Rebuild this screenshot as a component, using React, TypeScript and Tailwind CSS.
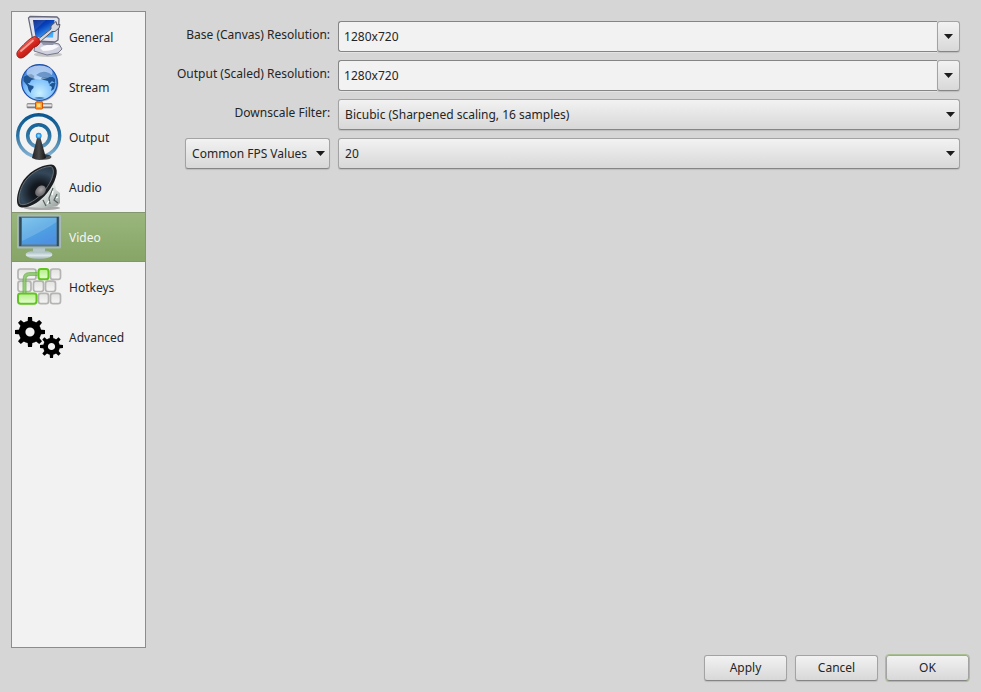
import { useState } from 'react';
import type { ReactNode } from 'react';

const GEAR_TEETH = [0, 45, 90, 135, 180, 225, 270, 315];

function GeneralIcon() {
  return (
    <svg viewBox="0 0 48 48" className="size-12 shrink-0" aria-hidden="true">
      <defs>
        <linearGradient id="pc-screen" x1="0" y1="0" x2="0.7" y2="1">
          <stop offset="0" stopColor="#001a78" />
          <stop offset="0.45" stopColor="#0743bd" />
          <stop offset="1" stopColor="#48b0ff" />
        </linearGradient>
        <linearGradient id="pc-handle" x1="0.2" y1="0.2" x2="0.8" y2="0.9">
          <stop offset="0" stopColor="#f58b80" />
          <stop offset="0.45" stopColor="#d8281f" />
          <stop offset="1" stopColor="#9c0d0a" />
        </linearGradient>
      </defs>
      <ellipse cx="33" cy="41.500" rx="14" ry="2.500" fill="#000" opacity="0.18" />
      <path d="M20 31 30 28 44 31 47 36 43 40 32 42 19 38Z" fill="#cfd0de" stroke="#777889" strokeWidth="1" strokeLinejoin="round" />
      <path d="M25 35q9-6 19-2-5 5-16 5Z" fill="#f7f7fc" />
      <path d="M25 27 41 28 38 32 28 32Z" fill="#9395a8" />
      <path d="M15 3.500 42 4 44 6 43 27 40 29 18 28 13.500 5Z" fill="#e1e2ec" stroke="#66687b" strokeWidth="1.300" strokeLinejoin="round" />
      <path d="M18 7 39.500 7 38 24.500 20.500 24.500Z" fill="url(#pc-screen)" />
      <path d="M18 7 31 7 20 17Z" fill="#fff" opacity="0.1" />
      <path d="M22 27 36 16 36 13 41 8.500 42 12 45 11.500 44 15 40 18.500 37 18.500 25 29Z" fill="#d5d7df" stroke="#555766" strokeWidth="1" strokeLinejoin="round" />
      <path d="M2.500 38.500C6 34 11 29 15.500 25.500q4-3.500 7-1 3.500 3 2 6-2 3-6 4C16 38 12 42 8 44.500c-4.500 2-7.500-2-5.500-6Z" fill="url(#pc-handle)" stroke="#98201a" strokeWidth="1" />
      <path d="M6 38 18 27.500" stroke="#ffb6ad" strokeWidth="1.800" strokeLinecap="round" opacity="0.8" />
    </svg>
  );
}

function StreamIcon() {
  return (
    <svg viewBox="0 0 48 48" className="size-12 shrink-0" aria-hidden="true">
      <defs>
        <radialGradient id="globe" cx="0.5" cy="0.8" r="0.8">
          <stop offset="0" stopColor="#c9f0ff" />
          <stop offset="0.5" stopColor="#7fc0fb" />
          <stop offset="1" stopColor="#2a6ccf" />
        </radialGradient>
        <linearGradient id="globe-shine" x1="0" y1="0" x2="0" y2="1">
          <stop offset="0" stopColor="#fff" stopOpacity="0.6" />
          <stop offset="1" stopColor="#fff" stopOpacity="0.4" />
        </linearGradient>
        <linearGradient id="pipe" x1="0" y1="0" x2="0" y2="1">
          <stop offset="0" stopColor="#8d8d8d" />
          <stop offset="0.4" stopColor="#f2f2f2" />
          <stop offset="1" stopColor="#666" />
        </linearGradient>
      </defs>
      <circle cx="25.500" cy="20.500" r="18" fill="#000" opacity="0.25" />
      <path d="M22 35h5v7h-5Z" fill="#aaa" stroke="#666" strokeWidth="0.600" />
      <circle cx="24.500" cy="19.500" r="17.800" fill="url(#globe)" stroke="#1c50ab" strokeWidth="1.200" />
      <path d="M8.500 14q4-3 8-3l3 2-1 2 2 1-4 1-2 3-2 0 2 2 4 1 0 2-2 2-1 3-2-3-1-4-4-5Z" fill="#1f5592" />
      <path d="M27 14 38 14 40 16 40 20 37 18 34 21 33 18 29 17 26 16Z" fill="#1f5592" />
      <path d="M37 20 40.500 20 39 26 36 28 37 24 34 22Z" fill="#1f5592" />
      <path d="M19 35q5-2 11 0-5 2-11 0Z" fill="#2868b4" opacity="0.8" />
      <ellipse cx="24.500" cy="9.500" rx="13" ry="7" fill="url(#globe-shine)" />
      <path d="M21 12q5-4 10-3 5 1 6 4-8 4-16-1Z" fill="#1f5592" opacity="0.45" />
      <rect x="12" y="40.500" width="25" height="4.500" rx="0.800" fill="url(#pipe)" stroke="#777" strokeWidth="0.600" />
      <rect x="20.500" y="39" width="7" height="7" rx="0.800" fill="#ff9d20" stroke="#d35400" strokeWidth="1" />
      <rect x="22" y="40.500" width="3.500" height="3.500" fill="#ffdf80" />
    </svg>
  );
}

function OutputIcon() {
  return (
    <svg viewBox="0 0 48 48" className="size-12 shrink-0" aria-hidden="true">
      <defs>
        <linearGradient id="waves" gradientUnits="userSpaceOnUse" x1="0" y1="0" x2="0" y2="46">
          <stop offset="0" stopColor="#07568f" />
          <stop offset="0.45" stopColor="#266f9f" />
          <stop offset="1" stopColor="#8fb9d8" />
        </linearGradient>
        <linearGradient id="mast" x1="0" y1="0" x2="1" y2="0">
          <stop offset="0" stopColor="#222" />
          <stop offset="0.5" stopColor="#4a4a4a" />
          <stop offset="1" stopColor="#111" />
        </linearGradient>
        <radialGradient id="beacon">
          <stop offset="0" stopColor="#a6e4ff" />
          <stop offset="1" stopColor="#087fe0" />
        </radialGradient>
      </defs>
      <circle cx="23.700" cy="22.700" r="21" fill="none" stroke="url(#waves)" strokeWidth="3.400" />
      <circle cx="23.700" cy="22.700" r="11" fill="none" stroke="url(#waves)" strokeWidth="3.600" />
      <ellipse cx="29" cy="44" rx="7.500" ry="2.800" fill="#000" opacity="0.65" />
      <path d="M22 25h3.500l5.500 20q-6.500 4-14 0Z" fill="url(#mast)" />
      <circle cx="23.700" cy="22.700" r="2.900" fill="url(#beacon)" />
    </svg>
  );
}

function AudioIcon() {
  return (
    <svg viewBox="0 0 48 48" className="size-12 shrink-0" aria-hidden="true">
      <defs>
        <radialGradient id="cone" gradientUnits="userSpaceOnUse" cx="25" cy="29" r="26">
          <stop offset="0" stopColor="#0c0f13" />
          <stop offset="0.35" stopColor="#141a21" />
          <stop offset="0.75" stopColor="#35485a" />
          <stop offset="1" stopColor="#2a3c4b" />
        </radialGradient>
        <radialGradient id="cap" cx="0.6" cy="0.45" r="0.6">
          <stop offset="0" stopColor="#aaa6a8" />
          <stop offset="1" stopColor="#626164" />
        </radialGradient>
        <linearGradient id="magnet" x1="0" y1="0" x2="1" y2="1">
          <stop offset="0" stopColor="#59605e" />
          <stop offset="0.5" stopColor="#e2e8e6" />
          <stop offset="1" stopColor="#8b9693" />
        </linearGradient>
      </defs>
      <ellipse cx="27" cy="45" rx="18" ry="2" fill="#000" opacity="0.3" />
      <path d="M39 17 41 27 45 30 45 40 42 43 28 45 12 44Z" fill="url(#magnet)" />
      <path d="M38 25 34 35 35 41M42 31l-3 6 4 3M28 37l3 6" stroke="#55615e" strokeWidth="1.200" fill="none" />
      <path d="M37 32l1-4M32 41l2-3M41 35l2-1" stroke="#fff" strokeWidth="1.300" />
      <path d="M36 1.500C26 2 12 9 6 21.500 1.500 31 1 40 3.500 43 8 47 20 43 29.500 33 38 24 44 11 41 5 40 2.500 38 1.500 36 1.500Z" fill="#1b1d20" />
      <path
        d="M35 3.500C26 4 13 11 7.500 22.500 3.500 31 3 38 5 41 9 43.500 19 39 27 30.500 35 22 40 11 38 6 37.500 4 36.500 3.500 35 3.500Z"
        fill="url(#cone)"
        stroke="#6d767b"
        strokeWidth="0.900"
      />
      <ellipse cx="25.500" cy="28" rx="6.200" ry="4.600" transform="rotate(-48 25.500 28)" fill="url(#cap)" />
    </svg>
  );
}

function VideoIcon() {
  return (
    <svg viewBox="0 0 48 48" className="size-12 shrink-0" aria-hidden="true">
      <defs>
        <linearGradient id="display" x1="0" y1="0" x2="0.6" y2="1">
          <stop offset="0" stopColor="#69bce9" />
          <stop offset="0.5" stopColor="#4fa3e2" />
          <stop offset="1" stopColor="#4d91e2" />
        </linearGradient>
        <linearGradient id="stand" x1="0" y1="0" x2="0" y2="1">
          <stop offset="0" stopColor="#8ea7aa" />
          <stop offset="0.6" stopColor="#dbe7ea" />
          <stop offset="1" stopColor="#9db2ae" />
        </linearGradient>
      </defs>
      <ellipse cx="24" cy="41.500" rx="13.300" ry="4.500" fill="url(#stand)" />
      <path d="M18 35h12v3.500q-6 3-12 0Z" fill="#b6c7ca" />
      <rect x="2" y="1.500" width="44" height="34" rx="1.500" fill="#a7bab7" />
      <rect x="3.800" y="3.500" width="40.400" height="30" fill="#5d7780" />
      <rect x="4.300" y="4" width="2" height="29" fill="#2f4b59" />
      <rect x="41.700" y="4" width="2" height="29" fill="#2f4b59" />
      <rect x="7" y="5" width="34.500" height="26.500" fill="url(#display)" />
      <path d="M7 5h34.500v4Q30 17 7 28Z" fill="#fff" opacity="0.16" />
    </svg>
  );
}

const KEYS = [
  { x: 3, y: 6, w: 18 },
  { x: 35.5, y: 6, w: 10 },
  { x: 3, y: 18.2, w: 13 },
  { x: 18.5, y: 18.2, w: 10 },
  { x: 30.5, y: 18.2, w: 10 },
  { x: 23.5, y: 30.4, w: 10 },
  { x: 35.5, y: 30.4, w: 10 },
  { x: 23.5, y: 6, w: 10, on: true },
  { x: 3, y: 30.4, w: 18.5, on: true },
];

function HotkeysIcon() {
  return (
    <svg viewBox="0 0 48 48" className="size-12 shrink-0" aria-hidden="true">
      <defs>
        <linearGradient id="key-on" x1="0" y1="0" x2="0" y2="1">
          <stop offset="0" stopColor="#b4ee86" />
          <stop offset="1" stopColor="#e4ffd2" />
        </linearGradient>
        <linearGradient id="key-off" x1="0" y1="0" x2="0" y2="1">
          <stop offset="0" stopColor="#e2e2e0" />
          <stop offset="1" stopColor="#f6f6f6" />
        </linearGradient>
      </defs>
      {KEYS.map((key) => (
        <rect
          key={`${key.x}-${key.y}`}
          x={key.x}
          y={key.y}
          width={key.w}
          height="10.300"
          rx="2.400"
          fill={key.on ? 'url(#key-on)' : 'url(#key-off)'}
          stroke={key.on ? '#62c420' : '#b4b4b2'}
          strokeWidth={key.on ? 2 : 1.7}
        />
      ))}
      <path d="M9.500 30V16.500q0-5.500 5.500-5.500h7.500" fill="none" stroke="#63ad3e" strokeWidth="4" opacity="0.7" />
      <path d="M9.500 30V16.500q0-5.500 5.500-5.500h7.500" fill="none" stroke="#98cf7b" strokeWidth="1.600" opacity="0.8" />
    </svg>
  );
}

function AdvancedIcon() {
  return (
    <svg viewBox="0 0 48 48" className="size-12 shrink-0" aria-hidden="true">
      <g transform="translate(15 19)">
        {GEAR_TEETH.map((angle) => (
          <path key={angle} d="M-2.500-9 -2-15H2L2.500-9Z" transform={`rotate(${angle})`} />
        ))}
        <circle r="7.900" fill="none" stroke="#000" strokeWidth="6.600" />
      </g>
      <g transform="translate(36.500 33.500)">
        {GEAR_TEETH.map((angle) => (
          <path key={angle} d="M-1.900-7 -1.500-11.500H1.500L1.900-7Z" transform={`rotate(${angle})`} />
        ))}
        <circle r="6" fill="none" stroke="#000" strokeWidth="4.800" />
      </g>
    </svg>
  );
}

const SECTIONS = [
  { name: 'General', icon: <GeneralIcon /> },
  { name: 'Stream', icon: <StreamIcon /> },
  { name: 'Output', icon: <OutputIcon /> },
  { name: 'Audio', icon: <AudioIcon /> },
  { name: 'Video', icon: <VideoIcon /> },
  { name: 'Hotkeys', icon: <HotkeysIcon /> },
  { name: 'Advanced', icon: <AdvancedIcon /> },
];

function Arrow() {
  return (
    <svg viewBox="0 0 9 5" className="h-[5px] w-[9px]" aria-hidden="true">
      <path d="M0 0H9L4.500 5Z" fill="#1c1c1c" />
    </svg>
  );
}

const raised =
  'rounded-[3px] border border-[#a3a3a3] border-b-[#858585] bg-linear-to-b from-[#f2f2f2] to-[#d8d8d8] shadow-[0_1px_1px_rgba(0,0,0,0.12)]';

function Select({ id, label, options }: { id: string; label?: string; options: string[] }) {
  return (
    <div className="relative">
      <select id={id} aria-label={label} className={`${raised} block h-[31px] w-full appearance-none pr-[22px] pl-1.5`}>
        {options.map((option) => (
          <option key={option}>{option}</option>
        ))}
      </select>
      <span className="pointer-events-none absolute inset-y-0 right-[5px] flex items-center">
        <Arrow />
      </span>
    </div>
  );
}

function ResolutionBox({ id, label }: { id: string; label: string }) {
  const [value, setValue] = useState('1280x720');
  return (
    <div className="flex h-[31px]">
      <input
        id={id}
        value={value}
        onChange={(e) => setValue(e.target.value)}
        className="min-w-0 flex-1 rounded-l-[3px] border border-r-0 border-[#858585] bg-[#f2f2f2] px-[5px] shadow-[0_1px_0_#e4e4e4]"
      />
      <button type="button" aria-label={label} className={`${raised} flex w-[23px] items-center justify-center`}>
        <Arrow />
      </button>
    </div>
  );
}

function FieldLabel({ htmlFor, children }: { htmlFor: string; children: ReactNode }) {
  return (
    <label htmlFor={htmlFor} className="pb-1 text-right whitespace-nowrap">
      {children}
    </label>
  );
}

export default function App() {
  const [active, setActive] = useState('Video');

  return (
    <div className="flex min-h-screen flex-col gap-[7px] bg-[#d6d6d6] py-[11px] pr-3 pl-[11px] font-['Noto_Sans',sans-serif] text-[12px] leading-4 text-[#252525]">
      <div className="flex flex-1 gap-[31px]">
        <nav className="w-[135px] shrink-0 border border-[#8c8c8c] bg-[#f2f2f2]">
          {SECTIONS.map((section) => (
            <button
              key={section.name}
              type="button"
              onClick={() => setActive(section.name)}
              className={`flex h-[50px] w-full items-center gap-1.5 border-y pl-[3px] text-left ${
                active === section.name
                  ? 'border-y-[#84966f] bg-linear-to-b from-[#9ab67d] to-[#87a566] text-[#f5f5f5]'
                  : 'border-transparent'
              }`}
            >
              {section.icon}
              <span className="pt-0.5">{section.name}</span>
            </button>
          ))}
        </nav>

        <main className="min-w-0 flex-1 pt-2.5 pr-[9px]">
          <form className="grid grid-cols-[auto_minmax(0,1fr)] items-center gap-2">
            <FieldLabel htmlFor="base">Base (Canvas) Resolution:</FieldLabel>
            <ResolutionBox id="base" label="Base resolutions" />

            <FieldLabel htmlFor="output">Output (Scaled) Resolution:</FieldLabel>
            <ResolutionBox id="output" label="Output resolutions" />

            <FieldLabel htmlFor="filter">Downscale Filter:</FieldLabel>
            <Select id="filter" options={['Bicubic (Sharpened scaling, 16 samples)']} />

            <div className="w-[145px] justify-self-end">
              <Select id="fps-type" label="FPS type" options={['Common FPS Values']} />
            </div>
            <Select id="fps" label="FPS" options={['20']} />
          </form>
        </main>
      </div>

      <footer className="flex justify-end gap-2">
        <button type="button" className={`${raised} h-[26px] w-[83px]`}>
          Apply
        </button>
        <button type="button" className={`${raised} h-[26px] w-[83px]`}>
          Cancel
        </button>
        <button type="button" className={`${raised} h-[26px] w-[83px] outline outline-[#a9bf92]`}>
          OK
        </button>
      </footer>
    </div>
  );
}
